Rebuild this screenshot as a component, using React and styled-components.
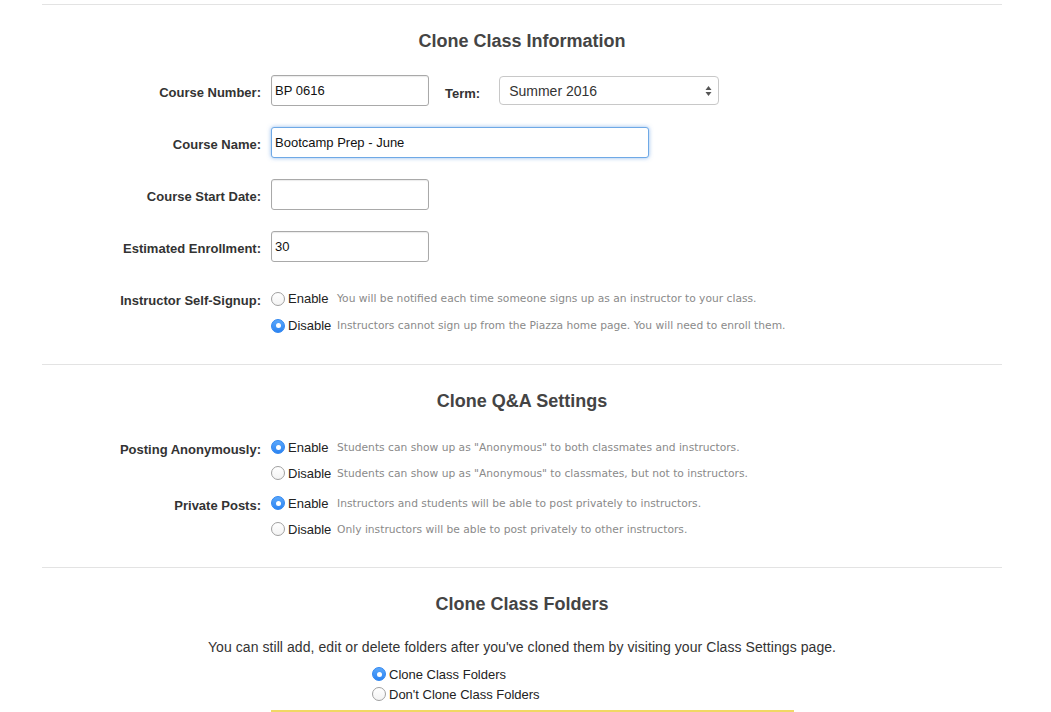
import React from "react";
import styled, { createGlobalStyle } from "styled-components";

const GlobalStyle = createGlobalStyle`
  body {
    margin: 0;
    background: #fff;
    font-family: "Liberation Sans", Arial, sans-serif;
    color: #333;
  }
`;

const Page = styled.div`
  width: 960px;
  margin-left: 42px;
  padding-top: 4px;
`;

const Divider = styled.div`
  border-top: 1px solid #e3e3e3;
`;

const Section = styled.section`
  padding: 25px 0 25px;
`;

const Heading = styled.h2`
  margin: 0 0 ${(p) => (p.$first ? 23 : 22)}px;
  text-align: center;
  font-size: 18px;
  line-height: 22px;
  font-weight: bold;
  color: #444;
`;

const FormGrid = styled.div`
  display: grid;
  grid-template-columns: 219px 1fr;
  column-gap: 10px;
  row-gap: ${(p) => p.$gap ?? 21}px;
  align-items: center;
  margin-top: ${(p) => p.$top || 0}px;
`;

const Label = styled.label`
  text-align: right;
  font-size: 13px;
  font-weight: bold;
  color: #333;
  align-self: ${(p) => (p.$top ? "start" : "center")};
  padding-top: ${(p) => (p.$top ? "8px" : "4px")};
`;

const InlineRow = styled.div`
  display: flex;
  align-items: center;
`;

const TextInput = styled.input`
  box-sizing: border-box;
  width: ${(p) => p.$width}px;
  height: 31px;
  padding: 0 3px;
  border: 1px solid ${(p) => (p.$focus ? "#6fa9e6" : "#a9a9a9")};
  border-radius: 3px;
  font-family: "Liberation Sans", Arial, sans-serif;
  font-size: 13px;
  color: #111;
  background: #fff;
  outline: none;
  box-shadow: ${(p) =>
    p.$focus
      ? "0 0 4px rgba(102, 160, 230, 0.7)"
      : "inset 0 1px 1px rgba(0, 0, 0, 0.08)"};
`;

const TermLabel = styled.span`
  margin: 0 19px 0 16px;
  font-size: 13px;
  font-weight: bold;
  color: #333;
  padding-top: 5px;
`;

const SelectBox = styled.div`
  box-sizing: border-box;
  width: 220px;
  height: 29px;
  display: flex;
  align-items: center;
  justify-content: space-between;
  padding: 0 6px 0 9px;
  border: 1px solid #c8c8c8;
  border-radius: 4px;
  font-size: 14px;
  color: #333;
  background: #fff;
`;

const OptionList = styled.div`
  display: flex;
  flex-direction: column;
  margin-left: ${(p) => p.$indent || 0}px;
`;

const OptionRow = styled.div`
  display: flex;
  align-items: center;
  height: ${(p) => p.$height || 26}px;
`;

const Radio = styled.span`
  box-sizing: border-box;
  width: 14px;
  height: 14px;
  border-radius: 50%;
  margin-right: 3px;
  flex: none;
  display: flex;
  align-items: center;
  justify-content: center;
  border: 1px solid ${(p) => (p.$checked ? "#2f86f0" : "#a0a0a0")};
  background: ${(p) =>
    p.$checked ? "linear-gradient(#5aa7fb, #2c84f2)" : "linear-gradient(#fff, #f3f3f3)"};

  &::after {
    content: "";
    display: ${(p) => (p.$checked ? "block" : "none")};
    width: 5px;
    height: 5px;
    border-radius: 50%;
    background: #fff;
  }
`;

const OptionText = styled.span`
  width: ${(p) => (p.$wide ? "auto" : "49px")};
  font-size: 13px;
  color: #222;
`;

const Hint = styled.span`
  font-family: "DejaVu Sans", Verdana, sans-serif;
  font-size: 10.7px;
  color: #8a8a8a;
`;

const Note = styled.p`
  margin: 0 0 7px;
  text-align: center;
  font-size: 14px;
  line-height: 20px;
  letter-spacing: 0.005em;
  color: #333;
`;

const WarnBox = styled.div`
  box-sizing: border-box;
  margin: 6px 0 0 229px;
  width: 523px;
  height: 40px;
  border: 2px solid #f1d864;
  border-bottom: none;
  background: #fffbe6;
`;

function UpDown() {
  return (
    <svg width="7" height="12" viewBox="0 0 7 12">
      <path d="M3.5 1 L6.5 5 L0.5 5 Z" fill="#555" />
      <path d="M3.5 11 L6.5 7 L0.5 7 Z" fill="#555" />
    </svg>
  );
}

function Choice({ checked, label, hint, height, wide }) {
  return (
    <OptionRow $height={height}>
      <Radio $checked={checked} />
      <OptionText $wide={wide}>{label}</OptionText>
      {hint && <Hint>{hint}</Hint>}
    </OptionRow>
  );
}

export default function App() {
  return (
    <>
      <GlobalStyle />
      <Page>
        <Divider />
        <Section>
          <Heading $first>Clone Class Information</Heading>
          <FormGrid>
            <Label>Course Number:</Label>
            <InlineRow>
              <TextInput $width={158} defaultValue="BP 0616" />
              <TermLabel>Term:</TermLabel>
              <SelectBox>
                <span>Summer 2016</span>
                <UpDown />
              </SelectBox>
            </InlineRow>

            <Label>Course Name:</Label>
            <InlineRow>
              <TextInput $width={378} $focus defaultValue="Bootcamp Prep - June" />
            </InlineRow>

            <Label>Course Start Date:</Label>
            <InlineRow>
              <TextInput $width={158} defaultValue="" />
            </InlineRow>

            <Label>Estimated Enrollment:</Label>
            <InlineRow>
              <TextInput $width={158} defaultValue="30" />
            </InlineRow>
          </FormGrid>
          <FormGrid $gap={0} $top={23}>
            <Label $top>Instructor Self-Signup:</Label>
            <OptionList>
              <Choice
                height={27}
                label="Enable"
                hint="You will be notified each time someone signs up as an instructor to your class."
              />
              <Choice
                height={27}
                checked
                label="Disable"
                hint="Instructors cannot sign up from the Piazza home page. You will need to enroll them."
              />
            </OptionList>
          </FormGrid>
        </Section>

        <Divider />
        <Section>
          <Heading>Clone Q&amp;A Settings</Heading>
          <FormGrid $gap={4}>
            <Label $top>Posting Anonymously:</Label>
            <OptionList>
              <Choice
                checked
                label="Enable"
                hint={'Students can show up as "Anonymous" to both classmates and instructors.'}
              />
              <Choice
                label="Disable"
                hint={'Students can show up as "Anonymous" to classmates, but not to instructors.'}
              />
            </OptionList>

            <Label $top>Private Posts:</Label>
            <OptionList>
              <Choice
                checked
                label="Enable"
                hint="Instructors and students will be able to post privately to instructors."
              />
              <Choice
                label="Disable"
                hint="Only instructors will be able to post privately to other instructors."
              />
            </OptionList>
          </FormGrid>
        </Section>

        <Divider />
        <Section>
          <Heading>Clone Class Folders</Heading>
          <Note>
            You can still add, edit or delete folders after you've cloned them by visiting your
            Class Settings page.
          </Note>
          <OptionList $indent={330}>
            <Choice height={20} wide checked label="Clone Class Folders" />
            <Choice height={20} wide label="Don't Clone Class Folders" />
          </OptionList>
          <WarnBox />
        </Section>
      </Page>
    </>
  );
}
